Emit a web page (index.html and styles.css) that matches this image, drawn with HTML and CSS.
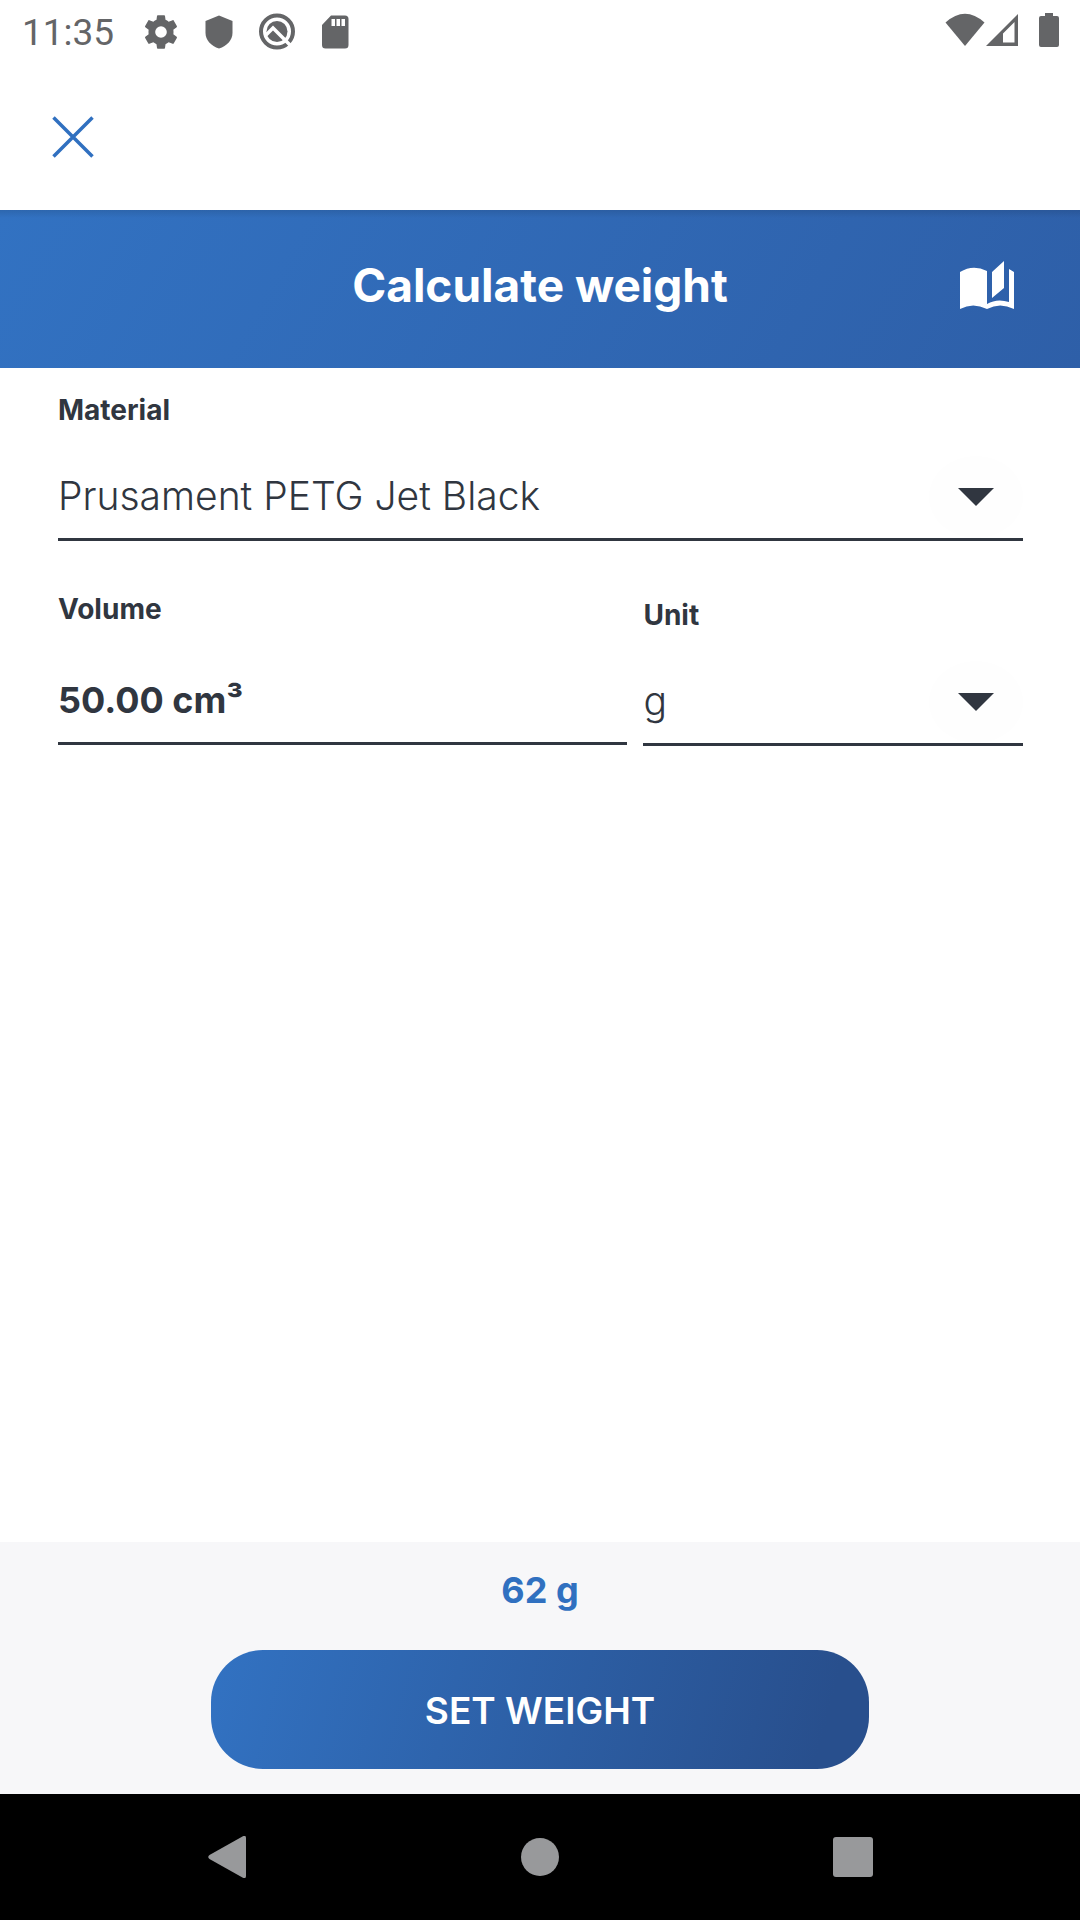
FILE: index.html
```html
<!DOCTYPE html>
<html lang="en">
<head>
<meta charset="utf-8">
<meta name="viewport" content="width=device-width, initial-scale=1">
<title>Calculate weight</title>
<link rel="stylesheet" href="styles.css">
</head>
<body>
<div class="status">
  <time class="clock">11:35</time>
  <div class="status-icons">
    <svg width="40" height="40" viewBox="0 0 24 24" aria-hidden="true"><path d="M19.400 13.400c.1-.5.1-.9.1-1.400s0-.9-.1-1.400l2-1.500c.2-.2.300-.4.100-.7l-1.900-3.300c-.1-.2-.4-.3-.6-.2l-2.400.9c-.7-.5-1.200-.8-1.900-1.100l-.3-2.300c0-.3-.2-.4-.5-.4h-3.800c-.3 0-.5.1-.5.4l-.3 2.300c-.7.3-1.200.6-1.900 1.100L5 4.900c-.2-.1-.5 0-.6.2L2.500 8.400c-.2.3-.1.5.1.7l2 1.500c-.1.500-.1.900-.1 1.400s0 .9.100 1.400l-2 1.500c-.2.200-.3.4-.1.700l1.900 3.300c.1.200.4.300.6.200l2.400-.9c.7.5 1.200.8 1.900 1.100l.3 2.300c0 .300.200.4.500.4h3.800c.3 0 .5-.1.500-.4l.3-2.300c.7-.3 1.200-.6 1.900-1.100l2.400.9c.2.1.5 0 .6-.2l1.900-3.300c.2-.3.1-.5-.1-.7zM12 15.500a3.500 3.500 0 1 1 0-7 3.500 3.500 0 0 1 0 7z"/></svg>
    <svg width="40" height="40" viewBox="0 0 40 40" aria-hidden="true"><path d="M20 3.500 33.500 9v12c0 7-5.500 13-13.500 15.500C12 34 6.500 28 6.500 21V9z"/></svg>
    <svg width="40" height="40" viewBox="0 0 40 40" aria-hidden="true"><circle cx="20" cy="19.500" r="16" fill="none" stroke="currentColor" stroke-width="4"/><circle cx="20" cy="19.500" r="10.500"/><path d="M8 24 16 16 33.500 33.500" fill="none" stroke="#fff" stroke-width="3.500"/></svg>
    <svg width="40" height="40" viewBox="0 0 40 40" aria-hidden="true"><path fill-rule="evenodd" d="M16 3.500h14a3.500 3.500 0 0 1 3.500 3.500v26a3.500 3.500 0 0 1-3.500 3.500H10.500A3.500 3.500 0 0 1 7 33V13zM16.500 7v7h3.500V7zm5 0v7H25V7zm5 0v7H30V7z"/></svg>
  </div>
  <div class="signals">
    <svg width="40" height="40" viewBox="0 0 40 40" aria-hidden="true"><path d="M0.500 10.500Q20-7 39.500 10.500L20 34z"/></svg>
    <svg width="34" height="40" viewBox="0 0 34 40" aria-hidden="true"><path fill-rule="evenodd" d="M33 2v32H1zM29.500 10 18 21.500V30.500h11.500z"/></svg>
    <svg width="20" height="40" viewBox="0 0 20 40" aria-hidden="true"><path d="M6 1h8v3h4q2 0 2 2v27q0 2-2 2H2q-2 0-2-2V6q0-2 2-2h4z"/></svg>
  </div>
</div>
<div class="toolbar">
  <button class="icon-button" type="button" aria-label="Close"><svg width="42" height="42" viewBox="0 0 42 42"><path d="M1.500 1.500 40.500 40.500M40.500 1.500 1.500 40.500" fill="none" stroke="currentColor" stroke-width="3.500"/></svg></button>
</div>
<header class="banner">
  <h1 class="title">Calculate weight</h1>
  <button class="icon-button book" type="button" aria-label="Material library"><svg width="54" height="48" viewBox="0 0 54 48"><path d="M0 11Q13 3 27 10V43Q37 37 49 41V8L54 11V48Q40 41 27 48 13 41 0 48zM32 11 44 0V27L32 37z"/></svg></button>
</header>
<form class="content">
  <div class="field">
    <label class="label" for="material">Material</label>
    <div class="picker">
      <select class="control" id="material"><option>Prusament PETG Jet Black</option></select>
      <span class="knob"><svg width="36" height="18" viewBox="0 0 36 18" aria-hidden="true"><path d="M0 0h36L18 18z"/></svg></span>
    </div>
  </div>
  <div class="row">
    <div class="field">
      <label class="label" for="volume">Volume</label>
      <input class="control strong" id="volume" type="text" value="50.00 cm³">
    </div>
    <div class="field unit">
      <label class="label" for="unit">Unit</label>
      <div class="picker">
        <select class="control" id="unit"><option>g</option></select>
        <span class="knob"><svg width="36" height="18" viewBox="0 0 36 18" aria-hidden="true"><path d="M0 0h36L18 18z"/></svg></span>
      </div>
    </div>
  </div>
</form>
<footer class="summary">
  <output class="result">62 g</output>
  <button class="submit" type="button">SET WEIGHT</button>
</footer>
<nav class="system-nav" aria-label="System">
  <button class="icon-button" type="button" aria-label="Back"><svg width="38" height="42" viewBox="0 0 38 42"><path d="M34 .7Q38-1.500 38 2V40Q38 43.500 34 41.300L1.500 23Q-1 21 1.500 19z"/></svg></button>
  <button class="icon-button" type="button" aria-label="Home"><svg width="38" height="38" viewBox="0 0 38 38"><circle cx="19" cy="19" r="19"/></svg></button>
  <button class="icon-button" type="button" aria-label="Recent apps"><svg width="40" height="40" viewBox="0 0 40 40"><rect width="40" height="40" rx="3"/></svg></button>
</nav>
</body>
</html>
```
FILE: styles.css
```css
* {
  box-sizing: border-box;
}

body {
  margin: 0;
  min-height: 100vh;
  display: flex;
  flex-direction: column;
  background: #fff;
  color: #303640;
  font-family: Inter, "Open Sans", sans-serif;
}

svg {
  display: block;
  fill: currentColor;
}

button,
input,
select {
  font: inherit;
  color: inherit;
}

.status {
  display: flex;
  align-items: center;
  height: 64px;
  padding: 0 21px 0 22px;
  color: #646567;
  font-family: Roboto, sans-serif;
}

.clock {
  padding-top: 2px;
  font-size: 37px;
  line-height: 62px;
}

.status-icons {
  display: flex;
  gap: 18px;
  margin-left: 27px;
}

.signals {
  display: flex;
  align-items: center;
  margin-left: auto;
}

.signals svg:last-child {
  margin-left: 20px;
}

.icon-button {
  display: grid;
  place-items: center;
  padding: 0;
  border: 0;
  background: none;
}

.toolbar {
  display: flex;
  align-items: center;
  height: 146px;
  padding: 0 52px;
  color: #3070c0;
}

.banner {
  display: grid;
  grid-template-columns: 1fr auto 1fr;
  align-items: center;
  height: 158px;
  padding: 0 66px 8px;
  background:
    linear-gradient(rgba(0, 0, 0, 0.1), transparent 8px),
    linear-gradient(120deg, #3272c2, #2e5fa8);
  color: #fff;
}

.title {
  grid-column: 2;
  margin: 0;
  font-size: 46px;
  line-height: 56px;
  font-weight: 700;
}

.book {
  justify-self: end;
}

.content {
  flex: 1;
  padding: 24px 57px 24px 58px;
}

.field {
  display: flex;
  flex-direction: column;
}

.label {
  font-size: 28px;
  line-height: 36px;
  font-weight: 700;
}

.picker {
  display: grid;
  align-items: center;
}

.control,
.knob {
  grid-area: 1 / 1;
}

.control {
  width: 100%;
  height: 113px;
  padding: 40px 0 16px;
  border: 0;
  border-bottom: 3px solid #303640;
  border-radius: 0;
  background: none;
  appearance: none;
  font-size: 39px;
  font-weight: 300;
}

.strong {
  height: 118px;
  padding-top: 46px;
  font-size: 36px;
  font-weight: 700;
}

.knob {
  justify-self: end;
  display: grid;
  place-items: center;
  width: 94px;
  height: 82px;
  margin-top: 24px;
  border-radius: 50%;
  background: #fefefe;
  pointer-events: none;
}

.row {
  display: grid;
  grid-template-columns: 3fr 2fr;
  gap: 16px;
  margin-top: 50px;
}

.unit {
  padding-top: 6px;
}

.summary {
  display: flex;
  flex-direction: column;
  align-items: center;
  padding: 24px 0 25px;
  background: #f7f7f9;
}

.result {
  font-size: 36px;
  line-height: 48px;
  font-weight: 700;
  color: #3070c0;
}

.submit {
  width: 61%;
  height: 119px;
  margin-top: 36px;
  padding: 2px 0 0;
  border: 0;
  border-radius: 52px;
  background: linear-gradient(105deg, #3272c2, #284f8d 92%);
  color: #fff;
  font-size: 37px;
  font-weight: 600;
}

.system-nav {
  display: grid;
  grid-template-columns: repeat(3, 1fr);
  height: 126px;
  padding: 0 71px;
  background: #000;
  color: #98999b;
}
```
